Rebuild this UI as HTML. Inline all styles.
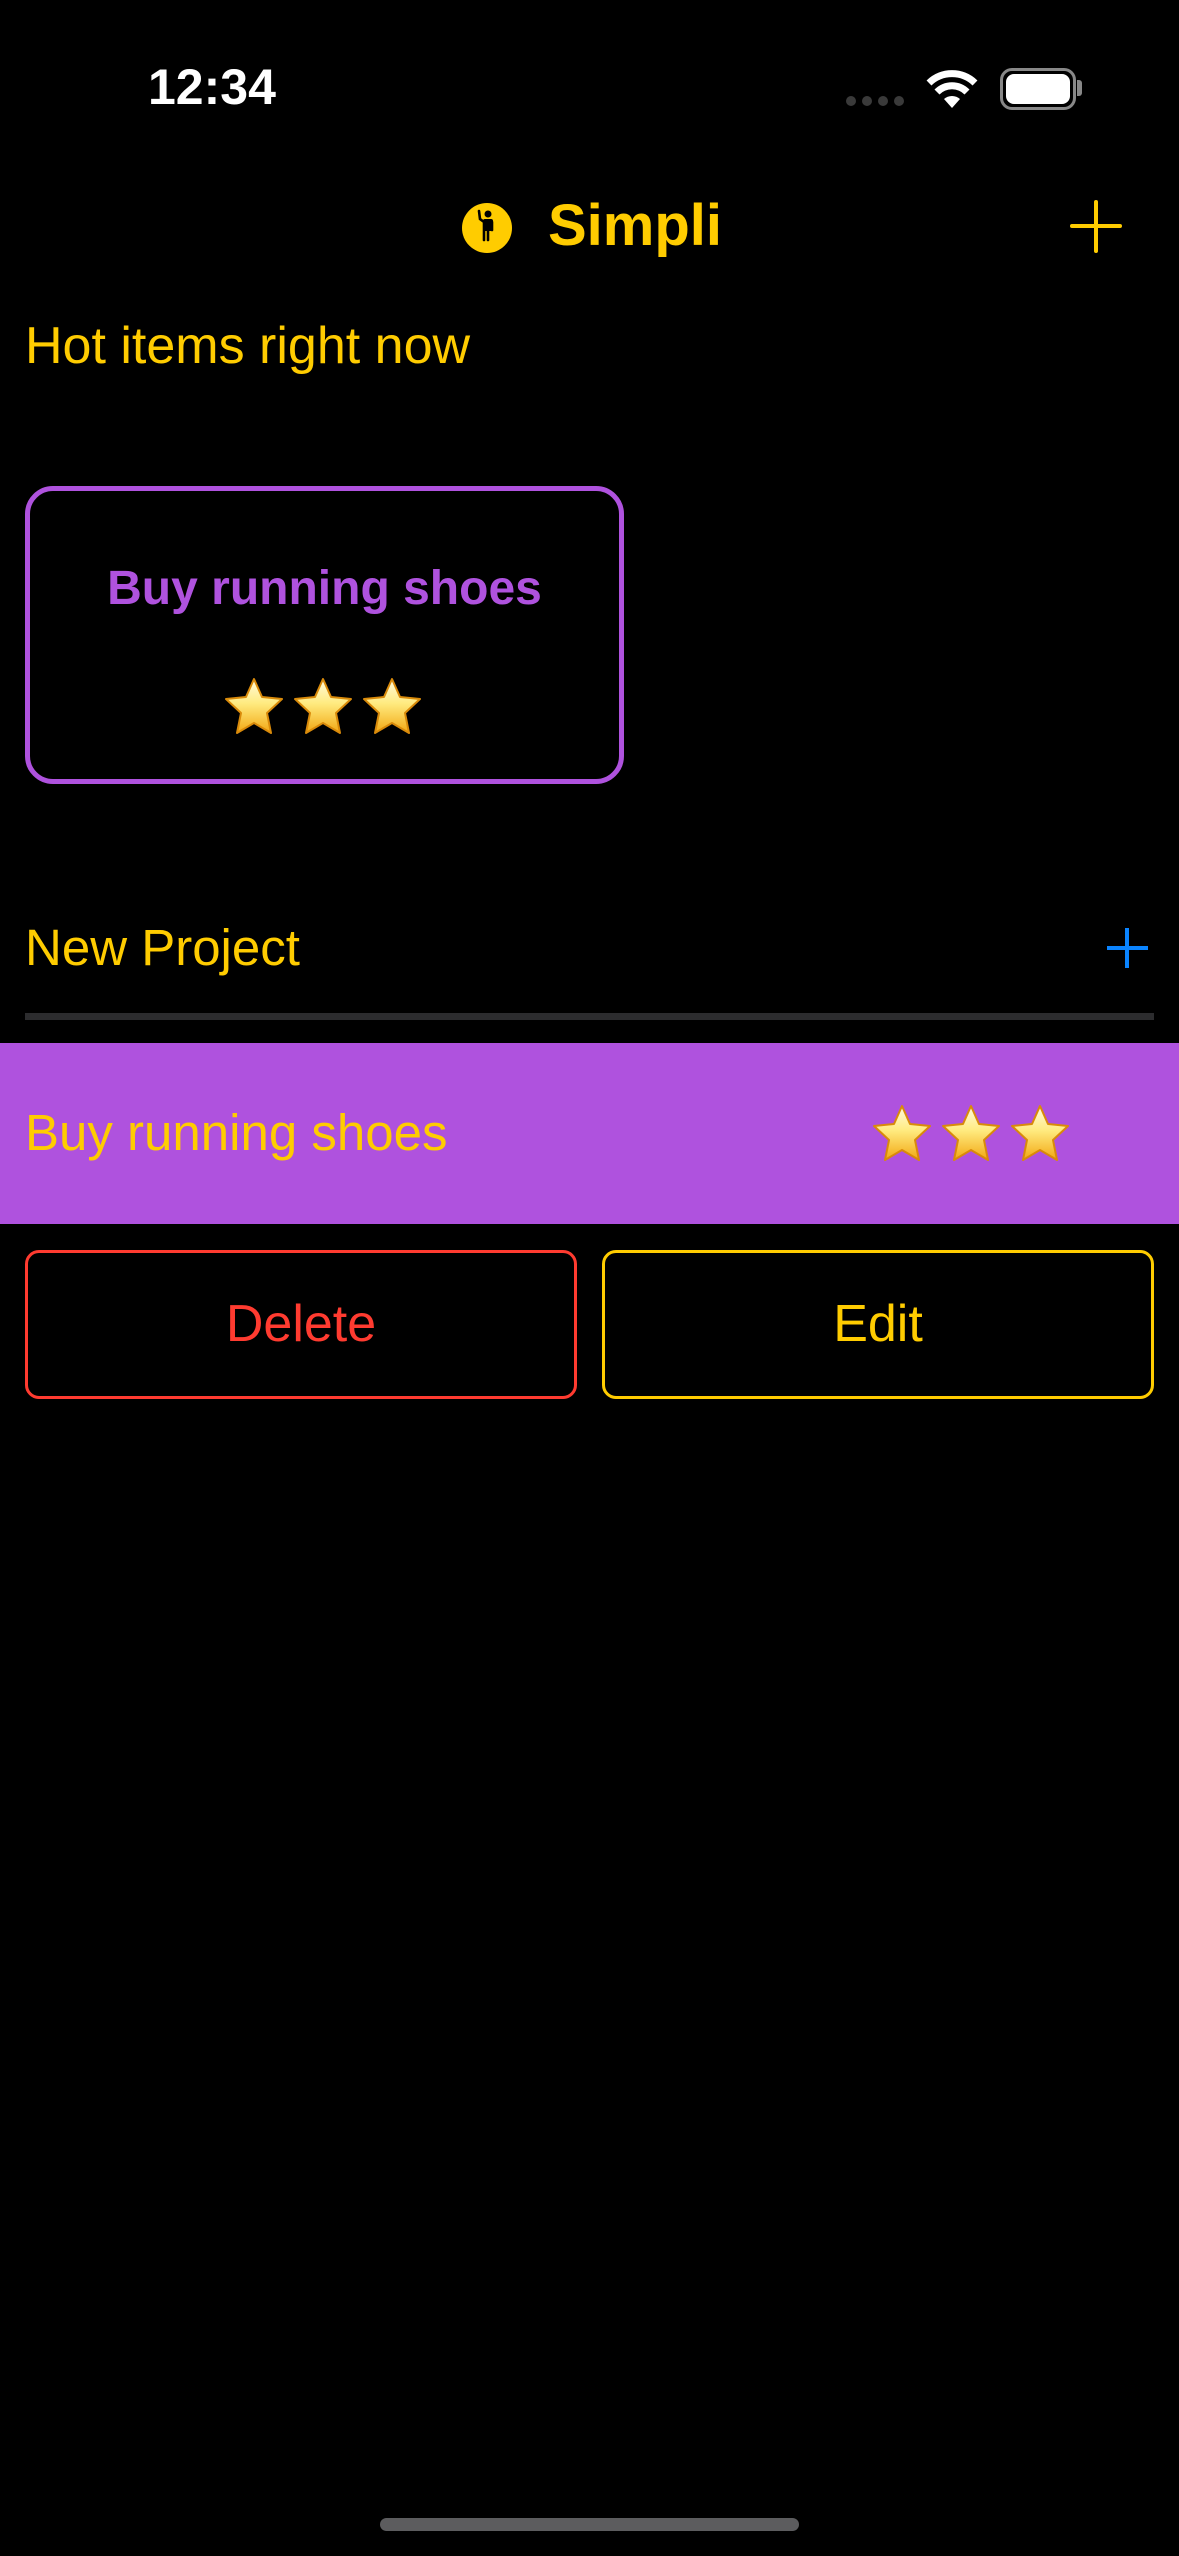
<!DOCTYPE html>
<html><head><meta charset="utf-8">
<style>
html,body{margin:0;padding:0;background:#000;}
body{width:1179px;height:2556px;position:relative;overflow:hidden;font-family:"Liberation Sans",sans-serif;}
.a{position:absolute;}
.t{position:absolute;white-space:nowrap;line-height:1;}
</style></head><body>
<svg width="0" height="0" style="position:absolute">
<defs>
<linearGradient id="sg" x1="0" y1="0" x2="0" y2="1">
<stop offset="0" stop-color="#fffbe0"/><stop offset="0.45" stop-color="#ffeb80"/><stop offset="1" stop-color="#f2a712"/>
</linearGradient>
<symbol id="star" viewBox="0 0 62 58">
<path d="M31 2 L39 20 L59 22 L44 36 L48 56 L31 46 L14 56 L18 36 L3 22 L23 20 Z" fill="url(#sg)" stroke="#d98a0a" stroke-width="2" stroke-linejoin="round"/>
</symbol>
</defs></svg>

<div class="t" style="left:148px;top:62px;font-size:50px;font-weight:bold;color:#fff;">12:34</div>
<div class="a" style="left:846px;top:96px;width:10px;height:10px;border-radius:5px;background:#3a3a3a"></div>
<div class="a" style="left:862px;top:96px;width:10px;height:10px;border-radius:5px;background:#3a3a3a"></div>
<div class="a" style="left:878px;top:96px;width:10px;height:10px;border-radius:5px;background:#3a3a3a"></div>
<div class="a" style="left:894px;top:96px;width:10px;height:10px;border-radius:5px;background:#3a3a3a"></div>
<svg class="a" style="left:924px;top:66px" width="56" height="42" viewBox="0 0 56 42">
<path d="M28 42 L20 33 A12 12 0 0 1 36 33 Z" fill="#fff"/>
<path d="M13 26 A21 21 0 0 1 43 26" stroke="#fff" stroke-width="7" fill="none"/>
<path d="M5 17 A33 33 0 0 1 51 17" stroke="#fff" stroke-width="7" fill="none"/>
</svg>
<div class="a" style="left:1000px;top:68px;width:70px;height:36px;border:3px solid #888;border-radius:12px;"></div>
<div class="a" style="left:1006px;top:74px;width:64px;height:30px;border-radius:8px;background:#fff;"></div>
<div class="a" style="left:1077px;top:80px;width:5px;height:16px;border-radius:0 3px 3px 0;background:#888;"></div>

<svg class="a" style="left:462px;top:203px" width="50" height="50" viewBox="0 0 50 50">
<circle cx="25" cy="25" r="25" fill="#ffcc00"/>
<circle cx="26" cy="11" r="3.5" fill="#000"/>
<path d="M17 8 L18 16 L22 19 L22 37 M26 27 L26 37 M30 19 L30 27" stroke="#000" stroke-width="2.6" fill="none" stroke-linecap="round"/>
<rect x="21" y="16" width="10" height="12" rx="2" fill="#000"/>
</svg>
<div class="t" style="left:548px;top:197px;font-size:58px;font-weight:bold;color:#ffcc00;">Simpli</div>
<div class="a" style="left:1094px;top:200px;width:4px;height:53px;background:#ffcc00;border-radius:2px"></div>
<div class="a" style="left:1070px;top:224px;width:52px;height:4px;background:#ffcc00;border-radius:2px"></div>

<div class="t" style="left:25px;top:320px;font-size:52px;color:#ffcc00;">Hot items right now</div>

<div class="a" style="left:25px;top:486px;width:589px;height:288px;border:5px solid #af52de;border-radius:28px;"></div>
<div class="t" style="left:25px;width:599px;text-align:center;top:565px;font-size:48px;font-weight:bold;color:#af52de;">Buy running shoes</div>
<svg class="a" style="left:223px;top:677px" width="62" height="58"><use href="#star"/></svg>
<svg class="a" style="left:292px;top:677px" width="62" height="58"><use href="#star"/></svg>
<svg class="a" style="left:361px;top:677px" width="62" height="58"><use href="#star"/></svg>

<div class="t" style="left:25px;top:922px;font-size:51px;color:#ffcc00;">New Project</div>
<div class="a" style="left:1125px;top:928px;width:4px;height:40px;background:#0a84ff"></div>
<div class="a" style="left:1107px;top:946px;width:41px;height:4px;background:#0a84ff"></div>
<div class="a" style="left:25px;top:1013px;width:1129px;height:7px;background:#2c2c2e"></div>

<div class="a" style="left:0;top:1043px;width:1179px;height:181px;background:#af52de"></div>
<div class="t" style="left:25px;top:1107px;font-size:51px;color:#ffcc00;">Buy running shoes</div>
<svg class="a" style="left:871px;top:1104px" width="62" height="58"><use href="#star"/></svg>
<svg class="a" style="left:940px;top:1104px" width="62" height="58"><use href="#star"/></svg>
<svg class="a" style="left:1009px;top:1104px" width="62" height="58"><use href="#star"/></svg>

<div class="a" style="left:25px;top:1250px;width:546px;height:143px;border:3px solid #ff3b30;border-radius:14px;"></div>
<div class="t" style="left:25px;width:552px;text-align:center;top:1298px;font-size:52px;color:#ff3b30;">Delete</div>
<div class="a" style="left:602px;top:1250px;width:546px;height:143px;border:3px solid #ffcc00;border-radius:14px;"></div>
<div class="t" style="left:602px;width:552px;text-align:center;top:1298px;font-size:52px;color:#ffcc00;">Edit</div>

<div class="a" style="left:380px;top:2518px;width:419px;height:13px;border-radius:7px;background:#5c5c5e"></div>
</body></html>
